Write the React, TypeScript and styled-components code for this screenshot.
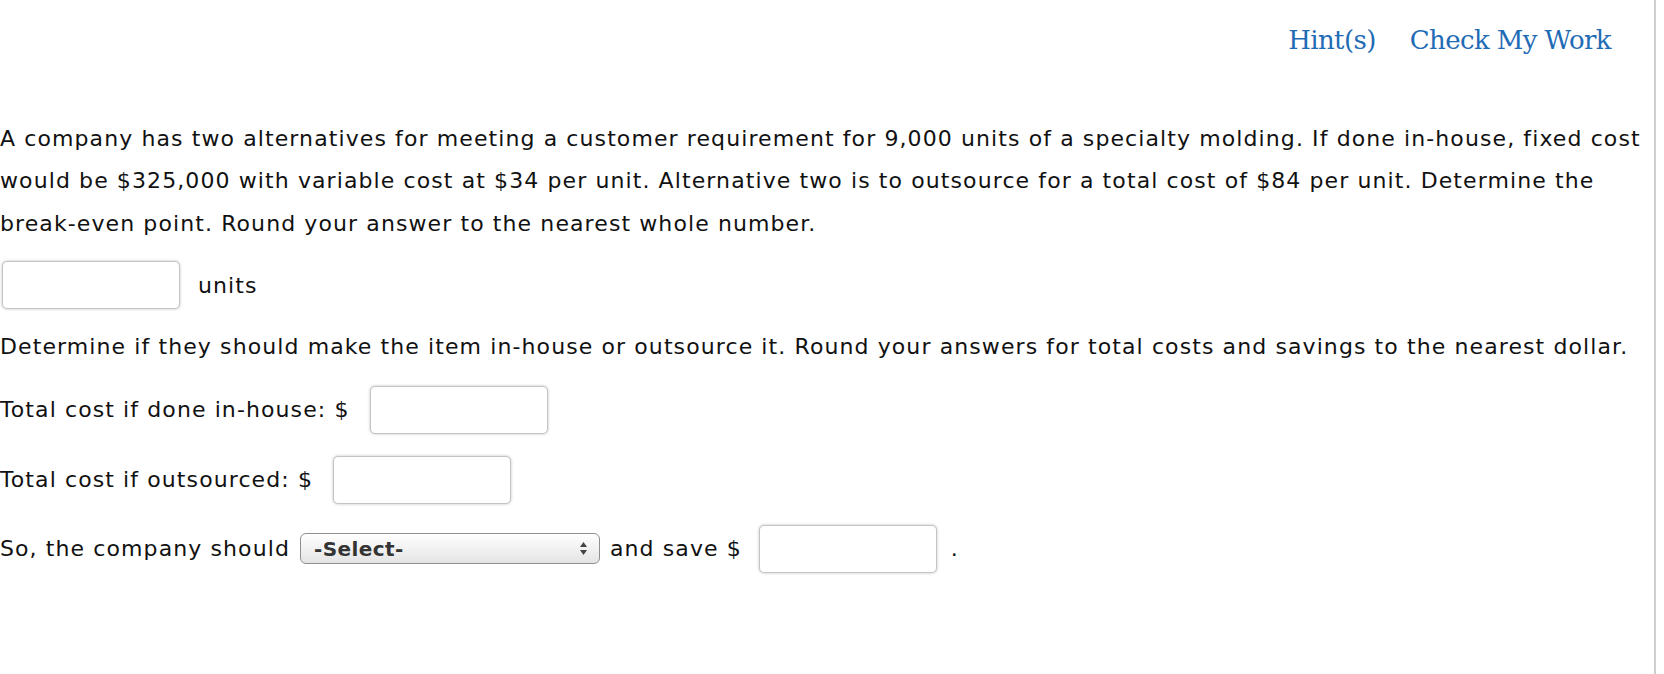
import React from "react";
import styled, { createGlobalStyle } from "styled-components";

const GlobalStyle = createGlobalStyle`
    html, body {
        margin: 0;
        padding: 0;
        background: #ffffff;
    }
    body {
        font-family: "DejaVu Sans", Verdana, sans-serif;
        color: #111111;
    }
`

const Page = styled.div`
    width: 1656px;
    min-height: 674px;
    border-right: 2px solid #cfcfcf;
    box-sizing: border-box;
    display: flex;
    flex-direction: column;
`

const Header = styled.div`
    height: 80px;
    display: flex;
    justify-content: flex-end;
    align-items: center;
    gap: 34px;
    padding-right: 43px;
`

const HeaderLink = styled.a`
    font-family: "DejaVu Serif", Georgia, serif;
    font-size: 26px;
    letter-spacing: -0.6px;
    color: #1f6bb5;
    text-decoration: none;
    cursor: pointer;
`

const Paragraph = styled.p<{ $top: number }>`
    margin: ${p => p.$top}px 0 0 0;
    font-size: 22px;
    letter-spacing: 1.1px;
    line-height: 42.4px;
    padding-right: 4px;
`

const Row = styled.div<{ $top: number }>`
    margin-top: ${p => p.$top}px;
    height: 48px;
    display: flex;
    align-items: center;
    font-size: 22px;
    letter-spacing: 1.1px;
    white-space: pre;
`

const AnswerInput = styled.input<{ $left?: number; $right?: number }>`
    width: 178px;
    height: 48px;
    box-sizing: border-box;
    margin: 0 ${p => p.$right ?? 0}px 0 ${p => p.$left ?? 0}px;
    border: 1px solid #c4c4c4;
    border-radius: 5px;
    box-shadow: 0 0 3px rgba(0, 0, 0, 0.25);
    background: #ffffff;
    font-size: 20px;
    padding: 0 8px;
    outline: none;
`

const SelectBox = styled.div`
    width: 300px;
    height: 31px;
    margin: 0 10px;
    box-sizing: border-box;
    border: 1px solid #8f8f8f;
    border-radius: 6px;
    background: linear-gradient(#ffffff, #e4e4e4);
    display: flex;
    align-items: center;
    justify-content: space-between;
    padding: 0 11px 0 13px;
    font-size: 20px;
    letter-spacing: 0.4px;
    font-weight: bold;
    color: #333333;
`

const Arrows = () => (
    <svg width="9" height="15" viewBox="0 0 9 15">
        <path d="M4.5 1 L8 6 L1 6 Z" fill="#444" />
        <path d="M4.5 14 L8 9 L1 9 Z" fill="#444" />
    </svg>
)

export default function App() {
    return (
        <>
            <GlobalStyle />
            <Page>
                <Header>
                    <HeaderLink>Hint(s)</HeaderLink>
                    <HeaderLink>Check My Work</HeaderLink>
                </Header>

                <Paragraph $top={38}>
                    A company has two alternatives for meeting a customer requirement for 9,000 units of a specialty molding. If done in-house, fixed cost would be $325,000 with variable cost at $34 per unit. Alternative two is to outsource for a total cost of $84 per unit. Determine the break-even point. Round your answer to the nearest whole number.
                </Paragraph>

                <Row $top={16}>
                    <AnswerInput $left={2} $right={18} />
                    units
                </Row>

                <Paragraph $top={17}>
                    Determine if they should make the item in-house or outsource it. Round your answers for total costs and savings to the nearest dollar.
                </Paragraph>

                <Row $top={17}>
                    Total cost if done in-house: $
                    <AnswerInput $left={20} />
                </Row>

                <Row $top={22}>
                    Total cost if outsourced: $
                    <AnswerInput $left={20} />
                </Row>

                <Row $top={21}>
                    So, the company should
                    <SelectBox>
                        -Select-
                        <Arrows />
                    </SelectBox>
                    and save $
                    <AnswerInput $left={17} $right={14} />
                    .
                </Row>
            </Page>
        </>
    );
}
